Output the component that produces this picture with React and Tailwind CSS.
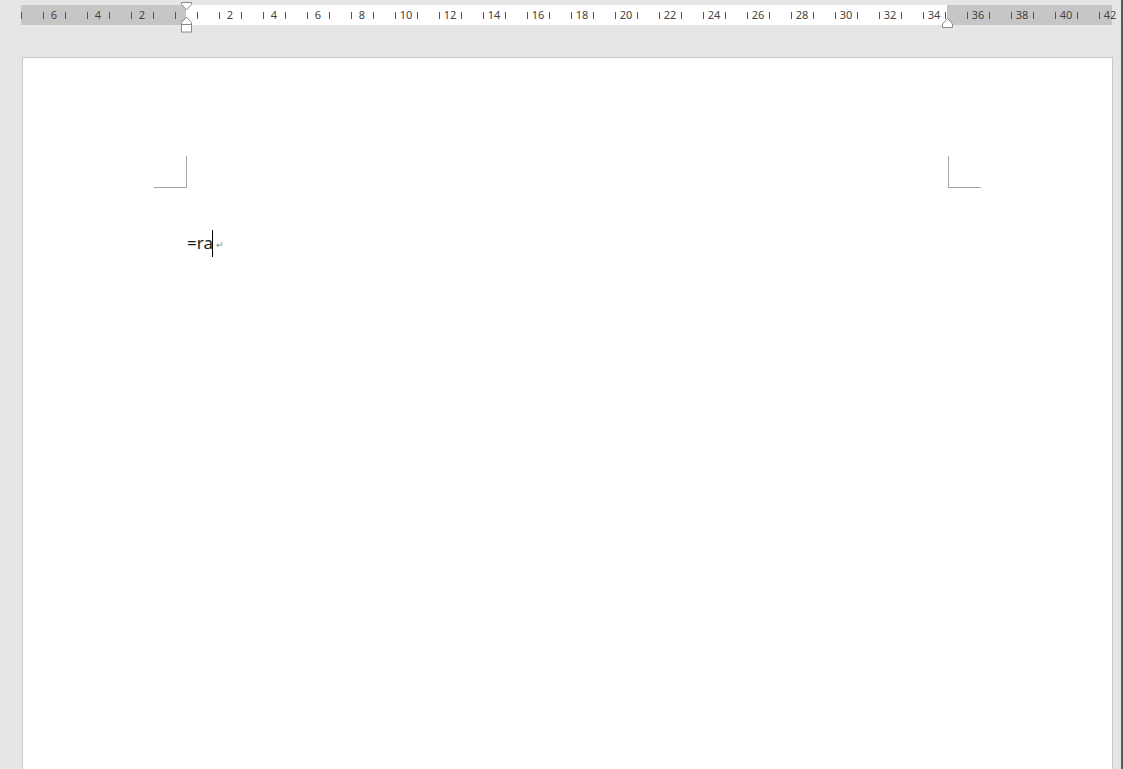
import React from "react";

const ORIGIN = 165; // ruler x for 0 (relative to ruler left at 21)
const UNIT = 22;

const Ruler = () => {
  const numbers = [];
  for (let k = -6; k <= 42; k += 2) {
    if (k === 0) continue;
    numbers.push(k);
  }
  const ticks = [];
  for (let j = -15; j <= 85; j += 2) ticks.push(ORIGIN + j * 11);

  return (
    <div className="relative h-[20px] w-[1091px] bg-[#c6c6c6] overflow-visible">
      <div className="absolute top-0 bottom-0 left-[165px] w-[761px] bg-white" />
      {ticks.map((x, i) => (
        <div key={i} className="absolute top-[7px] h-[7px] w-px bg-[#555]" style={{ left: x }} />
      ))}
      {numbers.map((k) => (
        <div
          key={k}
          className="absolute top-[3px] w-[20px] -ml-[10px] text-center text-[11px] leading-[14px] text-[#444]"
          style={{ left: ORIGIN + Math.abs(k) * UNIT * (k < 0 ? -1 : 1) }}
        >
          {Math.abs(k)}
        </div>
      ))}
      {/* first-line / hanging indent marker */}
      <svg className="absolute -top-[3px] left-[159px]" width="13" height="32" viewBox="0 0 13 32">
        <path d="M1.5 0.5 H11.5 V2.5 L6.5 8 L1.5 2.5 Z" fill="#fff" stroke="#8a8a8a" />
        <path d="M6.5 15 L11.5 20.5 V22.5 H1.5 V20.5 Z" fill="#fff" stroke="#8a8a8a" />
        <rect x="1.5" y="22.5" width="10" height="7.5" fill="#fff" stroke="#8a8a8a" />
      </svg>
      {/* right indent marker */}
      <svg className="absolute top-[12px] left-[920px]" width="13" height="12" viewBox="0 0 13 12">
        <path d="M6.5 1.5 L11.5 7 V10.5 H1.5 V7 Z" fill="#fff" stroke="#8a8a8a" />
      </svg>
    </div>
  );
};

export default function App() {
  return (
    <div
      className="flex h-[769px] w-full overflow-hidden bg-[#e6e6e6]"
      style={{ fontFamily: '"Noto Sans", "Liberation Sans", sans-serif' }}
    >
      <div className="flex flex-1 flex-col">
        <div className="pt-[5px] pl-[21px]">
          <Ruler />
        </div>
        <div className="mt-[32px] ml-[22px] h-[760px] w-[1091px] shrink-0 border border-[#c8c8c8] bg-white">
          <div className="flex justify-between pt-[98px] pl-[131px] pr-[131px]">
            <div className="h-[32px] w-[33px] border-r border-b border-[#a6a6a6]" />
            <div className="h-[32px] w-[33px] border-l border-b border-[#a6a6a6]" />
          </div>
          <div className="flex items-center pl-[164px] pt-[41px]">
            <span className="text-[17px] leading-[28px] text-[#222]">=ra</span>
            <span className="-ml-[1px] h-[27px] w-px bg-black" />
            <span className="ml-[3px] mt-[4px] text-[9px] text-[#888]">↵</span>
          </div>
        </div>
      </div>
      <div className="ml-[8px] w-[2px] bg-[#5c5c5c]" />
    </div>
  );
}
